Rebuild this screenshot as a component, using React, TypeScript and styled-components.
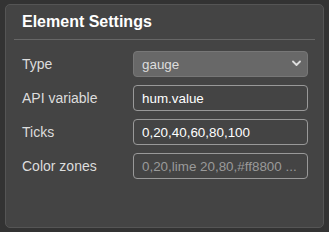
import React from 'react';
import styled, { createGlobalStyle } from 'styled-components';

const GlobalStyle = createGlobalStyle`
  html, body {
    margin: 0;
    padding: 0;
    background: #333333;
    font-family: "Liberation Sans", Arial, sans-serif;
  }
`;

const Page = styled.div`
  padding: 4px 5px;
`;

const Panel = styled.div`
  width: 319px;
  height: 224px;
  box-sizing: border-box;
  background: #444444;
  border: 1px solid #555555;
  border-radius: 5px;
  padding: 7px 8px;
`;

const Title = styled.div`
  font-size: 16px;
  line-height: 20px;
  font-weight: 700;
  color: #ffffff;
  padding: 0 8px 7px;
  border-bottom: 1px solid #666666;
`;

const Form = styled.div`
  display: flex;
  flex-direction: column;
  gap: 8px;
  padding: 11px 8px 0;
`;

const Row = styled.label`
  display: grid;
  grid-template-columns: 111px 175px;
  align-items: center;
`;

const Label = styled.span`
  font-size: 14px;
  color: #dddddd;
`;

const Input = styled.input`
  box-sizing: border-box;
  height: 26px;
  width: 175px;
  padding: 0 8px;
  border: 1px solid #999999;
  border-radius: 4px;
  background: #444444;
  color: #ffffff;
  font-family: inherit;
  font-size: 13.4px;
  outline: none;
  &::placeholder {
    color: #9a9a9a;
  }
`;

const SelectWrap = styled.div`
  position: relative;
  width: 175px;
  height: 26px;
`;

const Select = styled.select`
  appearance: none;
  box-sizing: border-box;
  width: 100%;
  height: 100%;
  padding: 0 8px;
  border: 1px solid #777777;
  border-radius: 4px;
  background: #686868;
  color: #dddddd;
  font-family: inherit;
  font-size: 13.4px;
  outline: none;
`;

const Chevron = styled.svg`
  position: absolute;
  right: 7px;
  top: 9px;
  pointer-events: none;
`;

export default function App() {
  return (
    <Page>
      <GlobalStyle />
      <Panel>
        <Title>Element Settings</Title>
        <Form>
          <Row>
            <Label>Type</Label>
            <SelectWrap>
              <Select defaultValue="gauge">
                <option value="gauge">gauge</option>
              </Select>
              <Chevron width="9" height="7" viewBox="0 0 9 7">
                <path d="M1 1.5 L4.5 5 L8 1.5" fill="none" stroke="#dddddd" strokeWidth="1.8" strokeLinecap="round" strokeLinejoin="round" />
              </Chevron>
            </SelectWrap>
          </Row>
          <Row>
            <Label>API variable</Label>
            <Input defaultValue="hum.value" />
          </Row>
          <Row>
            <Label>Ticks</Label>
            <Input defaultValue="0,20,40,60,80,100" />
          </Row>
          <Row>
            <Label>Color zones</Label>
            <Input placeholder="0,20,lime 20,80,#ff8800 ..." />
          </Row>
        </Form>
      </Panel>
    </Page>
  );
}
